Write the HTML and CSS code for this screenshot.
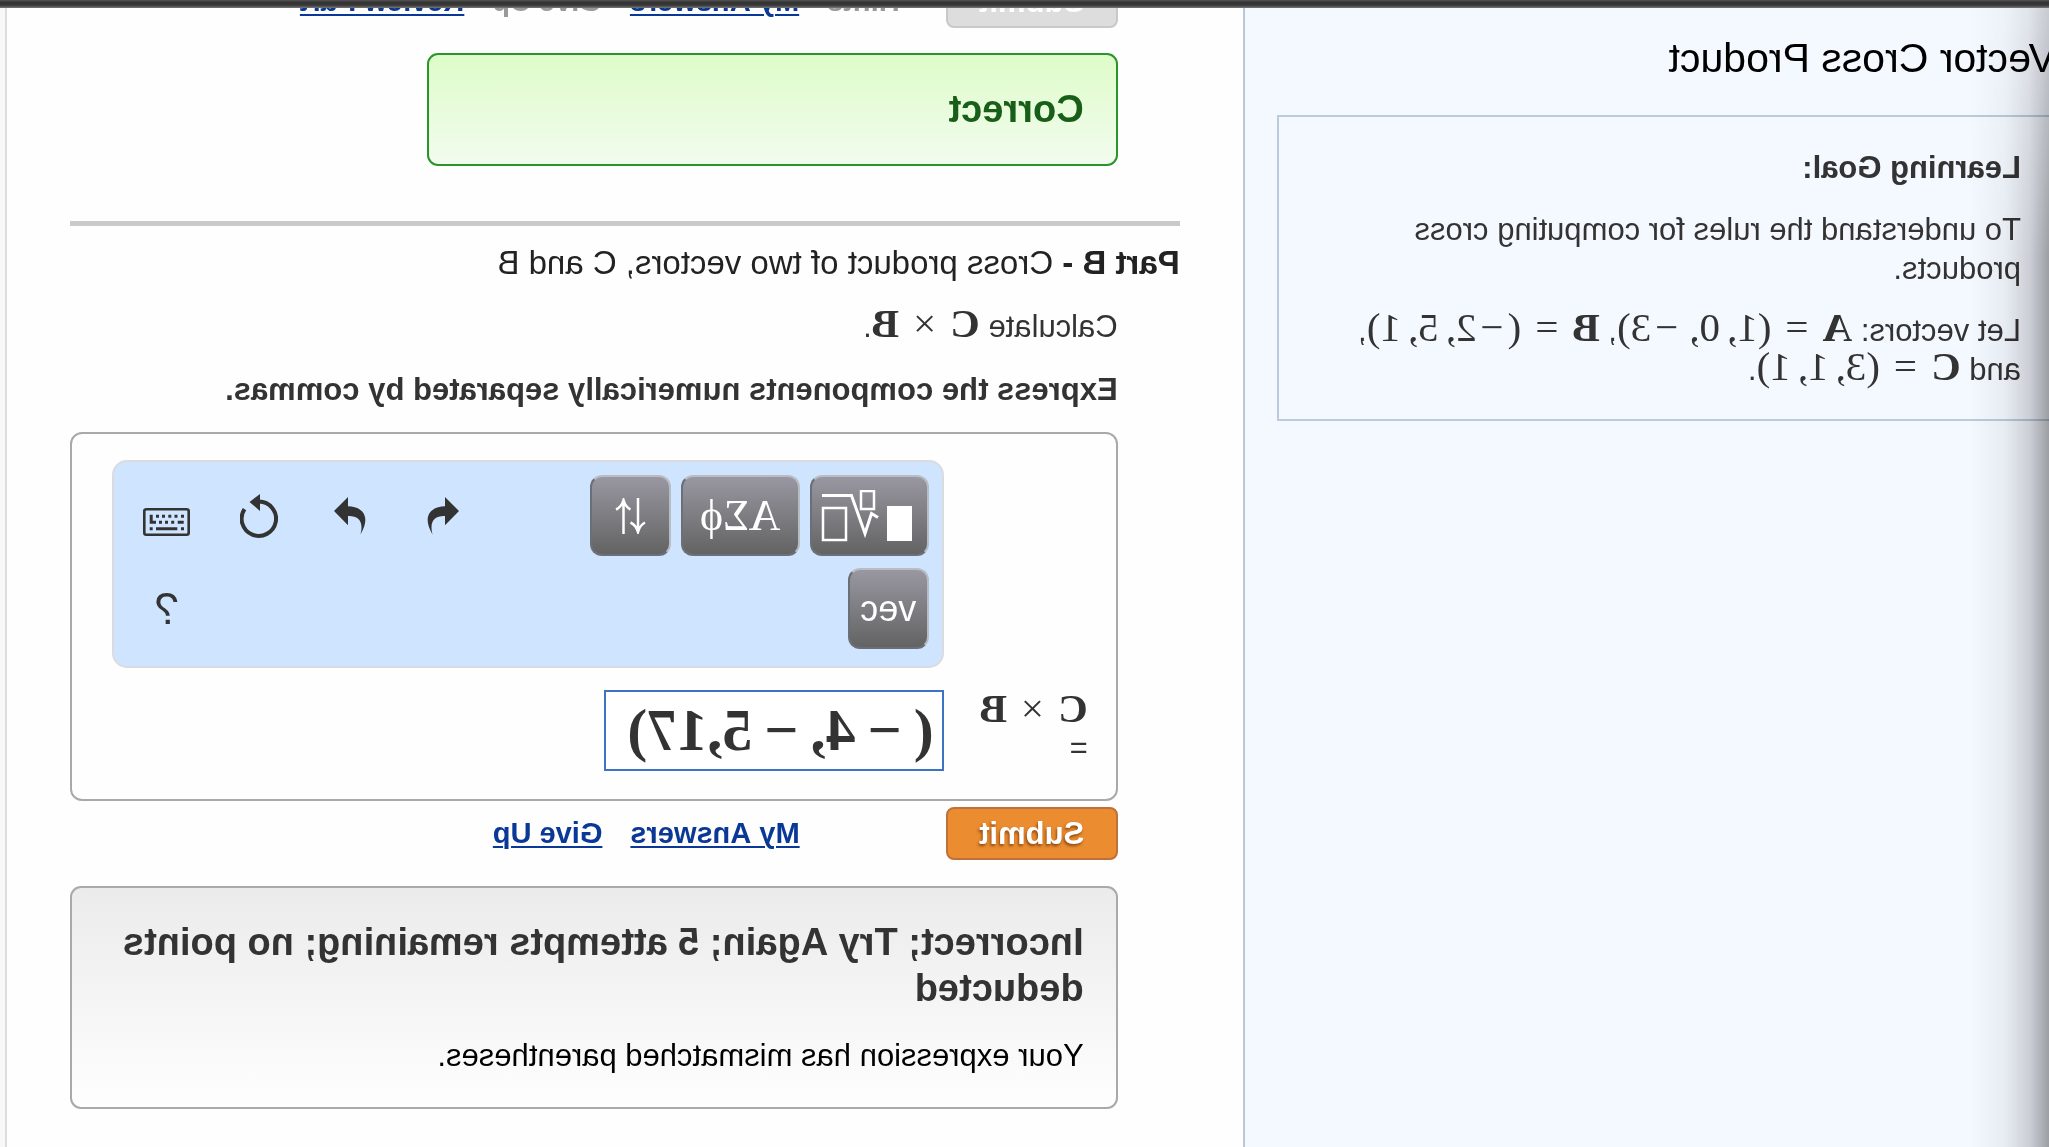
FILE: index.html
```html
<!DOCTYPE html>
<html lang="en">
<head>
    <meta charset="UTF-8">
    <meta name="viewport" content="width=device-width, initial-scale=1.0">
    <title>Vector Cross Product</title>
    <link rel="stylesheet" href="styles.css">
</head>
<body>
    <div class="page">
        <header class="topbar"></header>

        <div class="layout">
            <aside class="sidebar">
                <h1>Vector Cross Product</h1>
                <section class="goal">
                    <h2>Learning Goal:</h2>
                    <p>To understand the rules for computing cross products.</p>
                    <p>Let vectors: <span class="math"><b>A</b><i class="rel">=</i>(1,<i class="gap"></i>0,<i class="gap"></i><i class="minus">−</i>3)</span>, <span class="math"><b>B</b><i class="rel">=</i>(<i class="minus">−</i>2,<i class="gap"></i>5,<i class="gap"></i>1)</span>, and <span class="math"><b>C</b><i class="rel">=</i>(3,<i class="gap"></i>1,<i class="gap"></i>1)</span>.</p>
                </section>
            </aside>

            <main class="main">
                <!-- Part A, already answered -->
                <div class="actions actions-done">
                    <button type="button" class="submit" disabled>Submit</button>
                    <nav class="links">
                        <span class="off">Hints</span>
                        <a href="#">My Answers</a>
                        <span class="off">Give Up</span>
                        <a href="#">Review Part</a>
                    </nav>
                </div>
                <div class="feedback correct">
                    <h3>Correct</h3>
                </div>

                <hr>

                <!-- Part B -->
                <h2 class="part-title"><b>Part B -</b> Cross product of two vectors, C and B</h2>
                <div class="part">
                    <p>Calculate <span class="math"><b>C</b><i class="op">×</i><b>B</b></span>.</p>
                    <p class="hint">Express the components numerically separated by commas.</p>

                    <form class="answer" id="answerForm">
                        <div class="toolbar">
                            <div class="tool-row">
                                <div class="tools">
                                    <button type="button" class="tool wide templates" aria-label="Templates">
                                        <svg width="91" height="52" viewBox="0 0 91 52" fill="none" stroke="#fff">
                                            <rect x="0" y="16" width="25" height="35" fill="#fff" stroke="none"/>
                                            <rect x="38" y="1" width="13" height="18" stroke-width="2.5"/>
                                            <path d="M34 27.500l6.500-4 6.500 20L60.500 5.500H90" stroke-width="3"/>
                                            <rect x="66" y="18" width="23" height="32" stroke-width="2.500"/>
                                        </svg>
                                    </button>
                                    <button type="button" class="tool wide symbols">AΣϕ</button>
                                    <button type="button" class="tool" aria-label="Arrows">
                                        <svg width="32" height="36" viewBox="0 0 32 36" fill="none" stroke="#fff" stroke-width="2.500">
                                            <path d="M8 0v34M1 24.500q5 2.500 7 9.500q2-7 7.500-9.500"/>
                                            <path d="M22.500 36V2M15.500 11.500q5-2.500 7-9.500q2 7 7.500 9.500"/>
                                        </svg>
                                    </button>
                                </div>
                                <div class="icons">
                                    <button type="button" class="icon" aria-label="Undo">
                                        <svg width="33" height="38" viewBox="0 0 33 38"><path d="M0 14L14 0v9.300C27 9.500 38 18 26.500 37.500 30 24 24 18.500 14 19v9.300z"/></svg>
                                    </button>
                                    <button type="button" class="icon" aria-label="Redo">
                                        <svg width="33" height="38" viewBox="0 0 33 38"><path d="M33 14L19 0v9.300C6 9.500-5 18 6.500 37.500 3 24 9 18.500 19 19v9.300z"/></svg>
                                    </button>
                                    <button type="button" class="icon" aria-label="Reset">
                                        <svg width="38" height="44" viewBox="0 0 38 44">
                                            <path d="M19 7.500A17.200 17.200 0 1 0 33.500 15.200" fill="none" stroke="#333" stroke-width="4"/>
                                            <path d="M18 0l10.500 8L18 17z"/>
                                        </svg>
                                    </button>
                                    <button type="button" class="icon icon-keyboard" aria-label="Keyboard">
                                        <svg width="47" height="28" viewBox="0 0 47 28">
                                            <rect x="1.300" y="1.300" width="44.400" height="25.400" rx="2" fill="none" stroke="#333" stroke-width="2.600"/>
                                            <path d="M6 6.700h3v3H6zM12.500 6.700h3v3h-3zM18.700 6.700h3v3h-3zM25 6.700h3v3h-3zM31 6.700h3v3h-3zM37.300 6.700h3v9H34v-3h3.300z"/>
                                            <path d="M6.300 12.700h6v3h-6zM15.800 12.700h3v3h-3zM22 12.700h3v3h-3zM28 12.700h3v3h-3z"/>
                                            <path d="M6 19.200h3v3H6zM12.700 19.200H34v3H12.700zM37.300 19.200h3v3h-3z"/>
                                        </svg>
                                    </button>
                                </div>
                            </div>
                            <div class="tool-row">
                                <div class="tools">
                                    <button type="button" class="tool">vec</button>
                                </div>
                                <div class="icons">
                                    <button type="button" class="icon icon-help">?</button>
                                </div>
                            </div>
                        </div>

                        <label for="answer" class="answer-label">
                            <span class="math"><b>C</b><i class="op">×</i><b>B</b></span>
                            <span>=</span>
                        </label>
                        <input type="text" id="answer" name="answer" class="answer-input" value="(&thinsp;−&thinsp;4,&thinsp;−&thinsp;5,17)">
                    </form>

                    <div class="actions actions-open">
                        <button type="submit" form="answerForm" class="submit">Submit</button>
                        <nav class="links">
                            <a href="#">My Answers</a>
                            <a href="#">Give Up</a>
                        </nav>
                    </div>
                </div>

                <div class="feedback incorrect">
                    <h3>Incorrect; Try Again; 5 attempts remaining; no points deducted</h3>
                    <p>Your expression has mismatched parentheses.</p>
                </div>
            </main>
        </div>
    </div>
</body>
</html>
```

FILE: styles.css
```css
* {
    margin: 0;
    padding: 0;
    box-sizing: border-box;
}

body {
    font-family: "Liberation Sans", Arial, Helvetica, sans-serif;
    font-size: 31px;
    font-kerning: none;
    line-height: 39px;
    color: #333;
    background: #f8f8f8;
}

/* the whole page is shown flipped, as from a front camera */
.page {
    display: flex;
    flex-direction: column;
    height: 100vh;
    overflow: hidden;
    transform: scaleX(-1);
}

.topbar {
    flex: none;
    position: relative;
    z-index: 1;
    height: 8px;
    background: linear-gradient(#555, #333 30%, #383838 65%, #777);
}

.layout {
    flex: 1;
    min-height: 0;
    display: flex;
    padding-right: 5px;
}

/* Sidebar */
.sidebar {
    position: relative;
    flex: none;
    width: 39.45%;
    padding-top: 26px;
    background: #f4f8ff;
    border-right: 2px solid #b9c7dd;
}

/* soft shadow along the window edge */
.sidebar::before {
    content: "";
    position: absolute;
    top: 0;
    bottom: 0;
    left: 0;
    width: 80px;
    background: linear-gradient(to right, rgba(0, 0, 0, 0.36), rgba(0, 0, 0, 0.16) 25%, rgba(0, 0, 0, 0.05) 55%, transparent);
    mask-image: linear-gradient(rgba(0, 0, 0, 0.5), #000 250px);
}

.sidebar h1 {
    margin-left: -7px;
    font-size: 41px;
    font-weight: normal;
    font-kerning: normal;
    line-height: 48px;
    color: #000;
}

.goal {
    margin: 33px 32px 0 0;
    padding: 31px 27px 30px 28px;
    border: 2px solid #bccbdb;
    border-left: none;
}

.goal h2 {
    font-size: 31px;
}

.goal p {
    margin-top: 23px;
}

/* Formulas */
.math {
    font-family: "Liberation Serif", "Times New Roman", serif;
    font-size: 41px;
    line-height: 30px;
    white-space: nowrap;
}

.math i {
    font-style: normal;
}

.math .rel {
    margin: 0 14px;
}

.math .op {
    margin: 0 14px;
}

.math .minus {
    margin: 0 4px;
}

.math .gap {
    margin-left: 7px;
}

/* Question column */
.main {
    flex: 1;
    min-width: 0;
    overflow: hidden;
    padding: 0 63px;
    background: #fefefe;
    border-right: 2px solid #ddd;
}

.actions,
.feedback,
.part {
    margin-left: 62px;
}

.actions {
    display: flex;
    align-items: center;
}

.actions-done {
    margin-top: -33px;
}

.actions-open {
    margin: 6px 0 0;
}

.submit {
    width: 172px;
    height: 53px;
    font-family: inherit;
    font-size: 31px;
    font-weight: bold;
    color: #fff;
    background: #ea8c2f;
    border: 2px solid #c0703a;
    border-radius: 8px;
    text-shadow: 1px 2px 3px rgba(100, 40, 0, 0.7);
}

.submit:disabled {
    background: #ddd;
    border-color: #c9c9c9;
    text-shadow: none;
}

.links {
    display: flex;
    gap: 28px;
    margin-left: 46px;
    font-size: 29px;
    font-weight: bold;
}

.actions-open .links {
    margin-left: 146px;
}

.links a {
    color: #0a3896;
    text-decoration-thickness: 2px;
    text-underline-offset: 3px;
}

.links .off {
    color: #999;
}

.feedback {
    padding: 31px 32px 32px;
    border: 2px solid #a9a9a9;
    border-radius: 11px;
}

.feedback h3 {
    font-size: 38px;
    line-height: 46px;
}

.feedback p {
    margin-top: 25px;
    color: #000;
}

.correct {
    width: 62.2%;
    margin-top: 25px;
    color: #185e18;
    background: linear-gradient(#defcc9, #f2fcef);
    border-color: #2a962a;
}

.incorrect {
    margin-top: 26px;
    background: linear-gradient(#ebebeb, #fefefe);
}

hr {
    height: 5px;
    margin-top: 55px;
    border: none;
    background: #cacaca;
}

.part-title {
    margin-top: 17px;
    font-size: 33px;
    font-weight: normal;
    line-height: 40px;
    color: #222;
}

.part p {
    margin-top: 24px;
}

.part .hint {
    font-weight: bold;
}

/* Answer box */
.answer {
    display: grid;
    grid-template-columns: 144px 1fr;
    row-gap: 22px;
    margin-top: 23px;
    padding: 26px 40px 28px 28px;
    border: 2px solid #a9a9a9;
    border-radius: 12px;
}

.toolbar {
    grid-column: 2;
    display: flex;
    flex-direction: column;
    gap: 12px;
    padding: 13px 7px 17px 13px;
    background: #cfe5ff;
    border: 2px solid #d9dbdf;
    border-radius: 15px;
}

.tool-row {
    display: flex;
    justify-content: space-between;
}

.tools {
    display: flex;
    gap: 10px;
}

.tool {
    display: flex;
    align-items: center;
    justify-content: center;
    width: 81px;
    height: 81px;
    font-family: inherit;
    font-size: 36px;
    color: #fff;
    background: linear-gradient(#9997a1, #636363);
    border: 2px solid;
    border-color: #b8bdc4 #6b7078 #6b7078 #b8bdc4;
    border-radius: 12px;
}

.tool.wide {
    width: 119px;
}

.tool.templates {
    padding-left: 6px;
}

.tool.symbols {
    font-family: "Liberation Serif", "DejaVu Serif", serif;
    font-size: 44px;
}

.icons {
    display: flex;
}

.icon {
    display: flex;
    align-items: center;
    justify-content: center;
    width: 92px;
    height: 81px;
    background: none;
    border: none;
    color: #333;
    fill: #333;
}

.icon-keyboard {
    padding-top: 12px;
}

.icon-help {
    font-family: inherit;
    font-size: 44px;
}

.answer-label {
    display: flex;
    flex-direction: column;
    gap: 4px;
    line-height: 36px;
}

.answer-label .math {
    line-height: 36px;
}

.answer-input {
    width: 340px;
    height: 81px;
    padding: 0 8px;
    font-family: "Liberation Serif", "Times New Roman", serif;
    font-size: 60px;
    font-weight: bold;
    color: #333;
    background: #fff;
    border: 2px solid #3d72c4;
}
```
